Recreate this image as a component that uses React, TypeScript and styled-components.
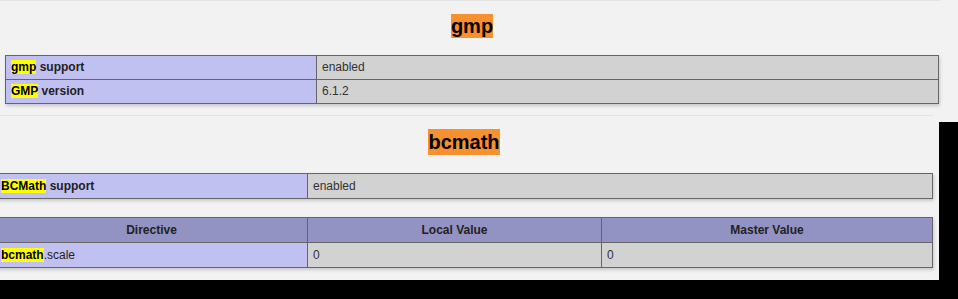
import React from 'react'
import styled, { createGlobalStyle } from 'styled-components'

const GlobalStyle = createGlobalStyle`
  html, body {
    margin: 0;
    padding: 0;
    background: #000000;
    overflow: hidden;
  }
  body {
    font-family: "Liberation Sans", Arial, sans-serif;
  }
`

const Page = styled.div`
  display: flex;
  flex-direction: column;
  width: 958px;
  height: 299px;
`

const Screen = styled.div<{ $width: number; $height: number }>`
  width: ${p => p.$width}px;
  height: ${p => p.$height}px;
  background: #f2f2f2;
  overflow: hidden;
  display: flex;
  flex-direction: column;
`

const Rule = styled.div<{ $width: number }>`
  width: ${p => p.$width}px;
  height: 1px;
  flex: none;
  background: #e3e3e3;
`

const Section = styled.div<{ $offset: number; $width: number; $top: number }>`
  width: ${p => p.$width}px;
  margin-left: ${p => p.$offset}px;
  margin-top: ${p => p.$top}px;
  display: flex;
  flex-direction: column;
  align-items: center;
  gap: 18px;
  flex: none;
`

const Heading = styled.h2<{ $lh: number }>`
  margin: 0;
  font-size: 20px;
  font-weight: bold;
  line-height: ${p => p.$lh}px;
  background: #f7902f;
  color: #000000;
  padding: 0;
`

const Table = styled.table<{ $width: number }>`
  width: ${p => p.$width}px;
  border-collapse: collapse;
  table-layout: fixed;
  box-shadow: 1px 2px 3px #c8c8c8;
  font-size: 12px;
  color: #222222;
`

const Cell = styled.td<{ $kind: 'e' | 'v' | 'h'; $lh: number }>`
  border: 1px solid #666666;
  padding: 4px 5px;
  line-height: ${p => p.$lh}px;
  white-space: nowrap;
  overflow: hidden;
  text-align: ${p => (p.$kind === 'h' ? 'center' : 'left')};
  font-weight: ${p => (p.$kind === 'v' ? 'normal' : 'bold')};
  color: ${p => (p.$kind === 'v' ? '#333333' : '#222222')};
  background: ${p =>
    p.$kind === 'e' ? '#c1c1f1' : p.$kind === 'h' ? '#9292c3' : '#d2d2d2'};
`

const Mark = styled.span`
  background: #ffff00;
  color: #000000;
`

const Row: React.FC<{ hit: string; rest: string; value: string; lh: number; bold?: boolean }> = ({
  hit,
  rest,
  value,
  lh,
}) => (
  <tr>
    <Cell $kind="e" $lh={lh}>
      <Mark>{hit}</Mark>
      {rest}
    </Cell>
    <Cell $kind="v" $lh={lh}>
      {value}
    </Cell>
  </tr>
)

const PlainLabel = styled.span`
  font-weight: normal;
`

export default function App() {
  return (
    <>
      <GlobalStyle />
      <Page>
        <Screen $width={958} $height={122}>
          <Rule $width={940} />
          <Section $offset={5} $width={934} $top={13} >
            <Heading $lh={24}>gmp</Heading>
            <Table $width={934} style={{ marginTop: -1 }}>
              <colgroup>
                <col style={{ width: 311 }} />
                <col />
              </colgroup>
              <tbody>
                <Row hit="gmp" rest=" support" value="enabled" lh={15} />
                <Row hit="GMP" rest=" version" value="6.1.2" lh={15} />
              </tbody>
            </Table>
          </Section>
          <Rule $width={933} style={{ marginTop: 11 }} />
        </Screen>
        <Screen $width={939} $height={158}>
          <Section $offset={-5} $width={938} $top={7}>
            <Heading $lh={26}>bcmath</Heading>
            <Table $width={938}>
              <colgroup>
                <col style={{ width: 312 }} />
                <col />
              </colgroup>
              <tbody>
                <Row hit="BCMath" rest=" support" value="enabled" lh={16} />
              </tbody>
            </Table>
            <Table $width={938}>
              <colgroup>
                <col style={{ width: 312 }} />
                <col style={{ width: 294 }} />
                <col />
              </colgroup>
              <tbody>
                <tr>
                  <Cell $kind="h" $lh={16}>Directive</Cell>
                  <Cell $kind="h" $lh={16}>Local Value</Cell>
                  <Cell $kind="h" $lh={16}>Master Value</Cell>
                </tr>
                <tr>
                  <Cell $kind="e" $lh={16}>
                    <Mark>bcmath</Mark>
                    <PlainLabel>.scale</PlainLabel>
                  </Cell>
                  <Cell $kind="v" $lh={16}>0</Cell>
                  <Cell $kind="v" $lh={16}>0</Cell>
                </tr>
              </tbody>
            </Table>
          </Section>
        </Screen>
      </Page>
    </>
  )
}
